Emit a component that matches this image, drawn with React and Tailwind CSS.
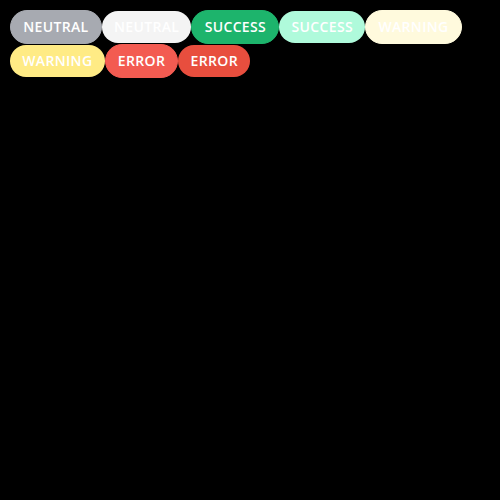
const badges = [
  { label: "Neutral", cls: "bg-[#a7aab1] border border-[#a7aab1]" },
  { label: "Neutral", cls: "bg-[#f4f4f4]" },
  { label: "Success", cls: "bg-[#1db46c] border border-[#1db46c]" },
  { label: "Success", cls: "bg-[#affadb]" },
  { label: "Warning", cls: "bg-[#fffadd] border border-[#fffadd]" },
  { label: "Warning", cls: "bg-[#ffeb85]" },
  { label: "Error", cls: "bg-[#f35b51] border border-[#f35b51]" },
  { label: "Error", cls: "bg-[#e84e3e]" },
];

export default function App() {
  return (
    <div className="min-h-screen bg-black p-[10px] font-['Open_Sans',sans-serif]">
      <div className="flex flex-wrap items-center">
        {badges.map((b, i) => (
          <span
            key={i}
            className={
              "inline-flex h-[32px] items-center rounded-full px-[12.2px] text-sm font-semibold uppercase tracking-wide text-white box-content " +
              b.cls
            }
          >
            {b.label}
          </span>
        ))}
      </div>
    </div>
  );
}
